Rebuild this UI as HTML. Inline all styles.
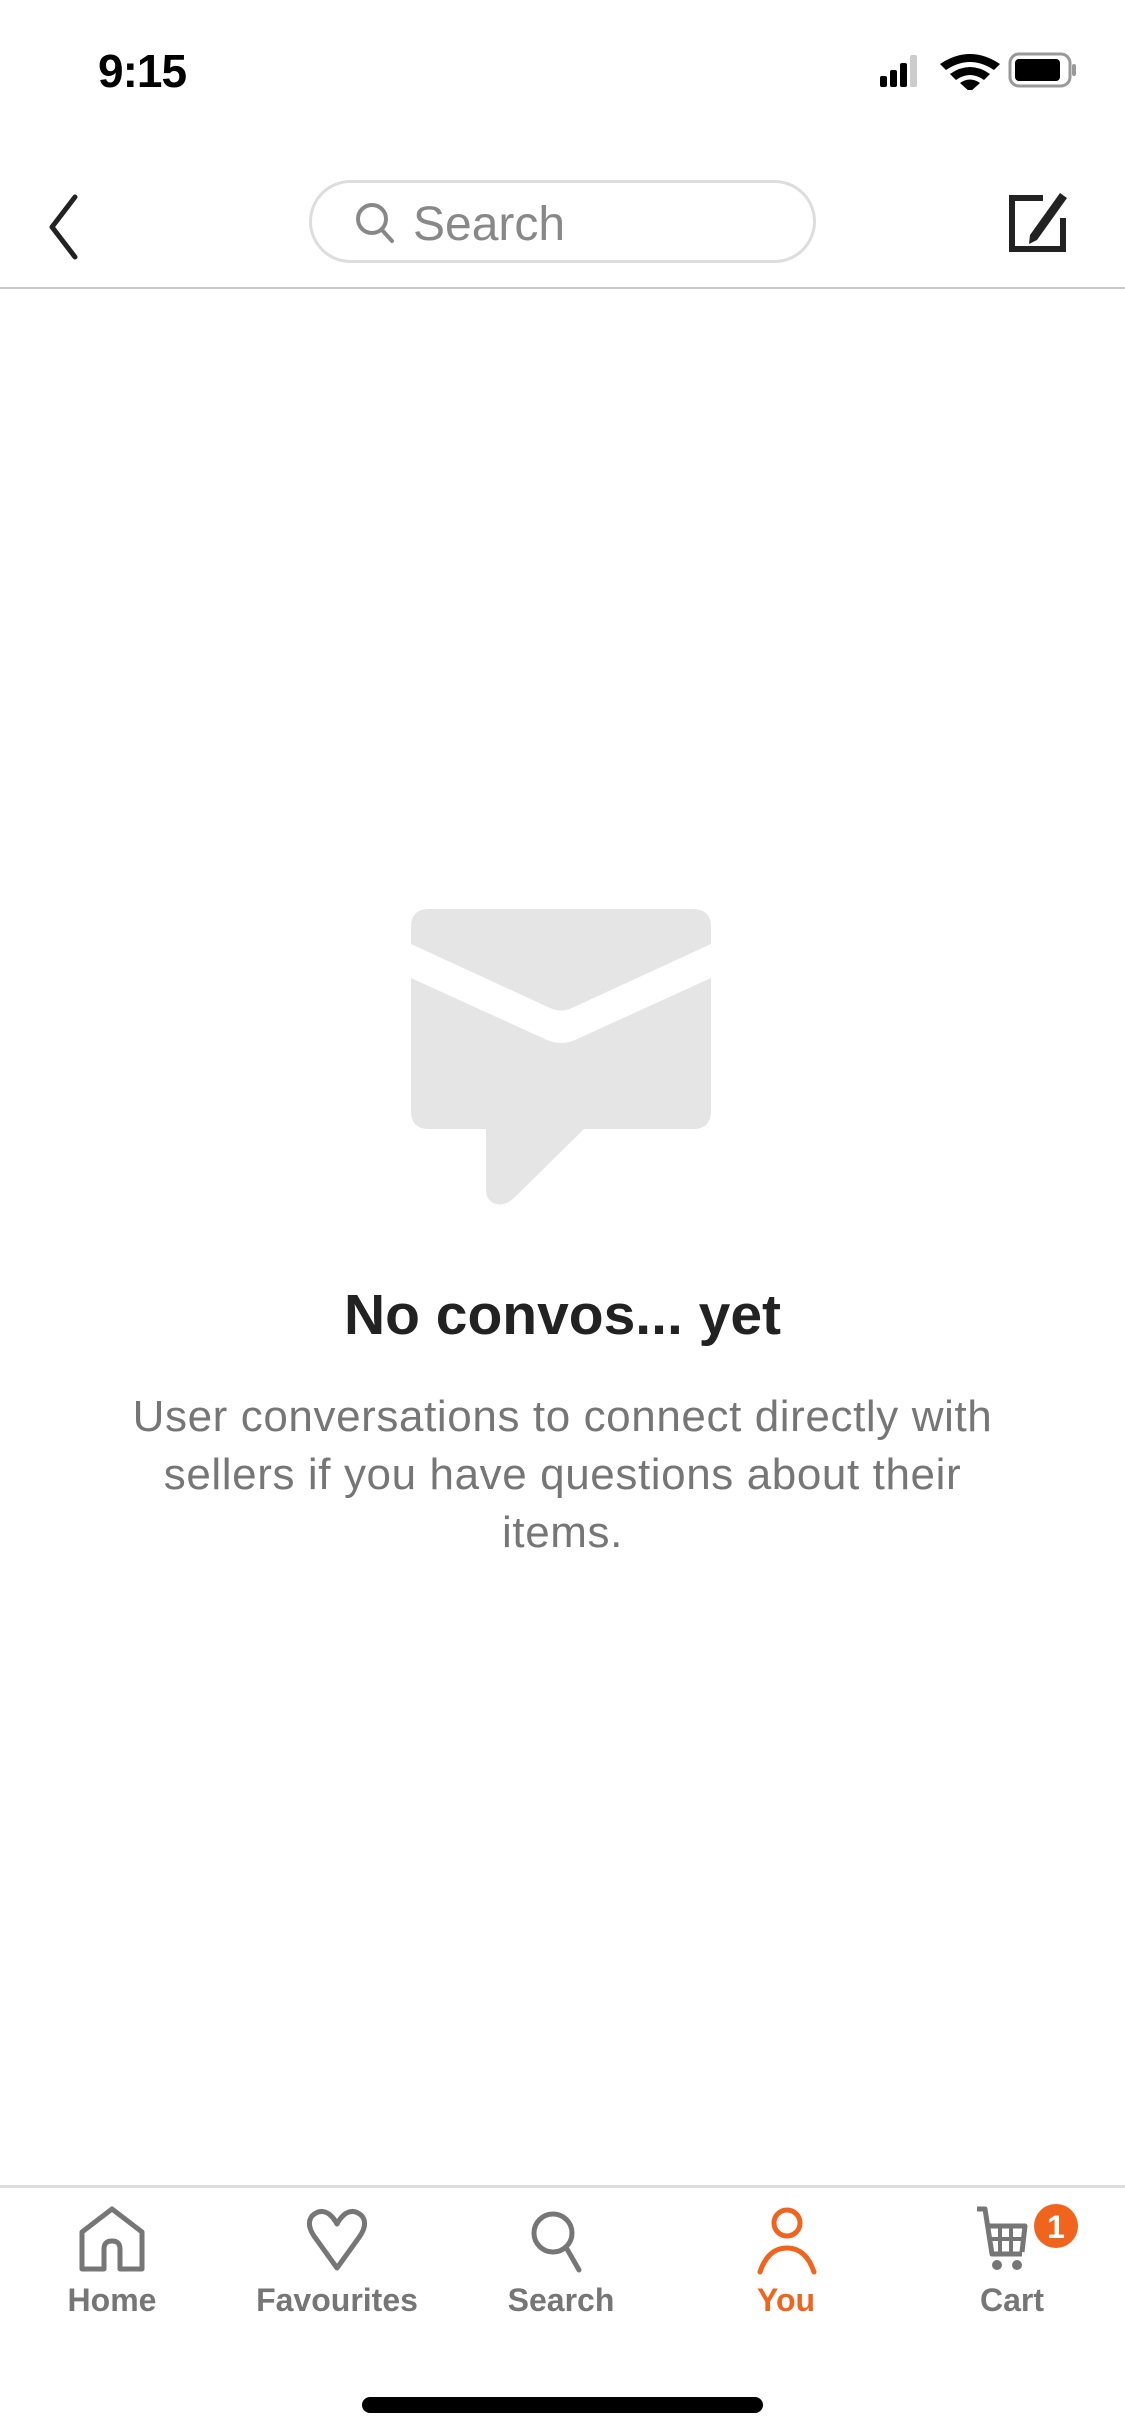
<!DOCTYPE html>
<html><head><meta charset="utf-8"><style>
*{margin:0;padding:0;box-sizing:border-box}
body{width:1125px;height:2436px;background:#fff;position:relative;overflow:hidden;font-family:"Liberation Sans",sans-serif}
.abs{position:absolute}
.time{left:98px;top:44px;font-size:46px;font-weight:bold;color:#000;letter-spacing:-1px}
.pill{left:309px;top:180px;width:507px;height:83px;border:3px solid #ddd;border-radius:42px}
.pill span{position:absolute;left:101px;top:14px;font-size:48px;color:#888}
.hr{left:0;width:1125px;height:2px;background:#c8c8c8}
.title{left:0;width:1125px;top:1282px;text-align:center;font-size:57px;font-weight:bold;color:#222;letter-spacing:0px}
.desc{left:112px;width:901px;top:1388px;text-align:center;font-size:44px;line-height:58px;color:#767676;letter-spacing:0.6px}
.tab{top:2282px;width:220px;text-align:center;font-size:32px;font-weight:bold;color:#767676}
</style></head><body>
<div class="abs time">9:15</div>
<svg class="abs" style="left:870px;top:50px" width="210" height="40" viewBox="0 0 210 40">
<rect x="10" y="26" width="7" height="11" rx="2" fill="#000"/>
<rect x="20" y="20" width="7" height="17" rx="2" fill="#000"/>
<rect x="30" y="13" width="7" height="24" rx="2" fill="#000"/>
<rect x="40" y="5" width="7" height="32" rx="2" fill="#ccc"/>
<path d="M70 14 Q100 -6 130 14 L124 20 Q100 4 76 20Z M80 24 Q100 10 120 24 L114 30 Q100 20 86 30Z M90 33 Q100 26 110 33 L100 42Z" fill="#000"/>
<rect x="140" y="4" width="60" height="32" rx="9" fill="none" stroke="#999" stroke-width="3"/>
<rect x="145" y="9" width="45" height="22" rx="4" fill="#000"/>
<rect x="202" y="14" width="4" height="12" rx="2" fill="#999"/>
</svg>
<svg class="abs" style="left:40px;top:190px" width="50" height="70"><path d="M35 7 L12 37 L35 67" fill="none" stroke="#222" stroke-width="5" stroke-linecap="round" stroke-linejoin="round"/></svg>
<div class="abs pill"><svg class="abs" style="left:42px;top:18px" width="50" height="50"><circle cx="18" cy="18" r="14" fill="none" stroke="#888" stroke-width="4"/><path d="M28 29 L38 40" stroke="#888" stroke-width="4" stroke-linecap="round"/></svg><span>Search</span></div>
<svg class="abs" style="left:1005px;top:188px" width="70" height="70"><path d="M38 10 H7 V61 H58 V30" fill="none" stroke="#222" stroke-width="6"/><path d="M55 5 L62 10 L32 52 L24 56 L25 47Z" fill="#222"/></svg>
<div class="abs hr" style="top:287px"></div>
<svg class="abs" style="left:400px;top:900px" width="330" height="320">
<path d="M29 9 H293 Q311 9 311 27 V211 Q311 229 293 229 H184 L115 297 Q104 308 93 303 Q86 299 86 290 V229 H29 Q11 229 11 211 V27 Q11 9 29 9Z" fill="#e5e5e5"/>
<path d="M11 44 L150 108 Q161 113 172 108 L311 44 L311 78 L175 140 Q161 146 147 140 L11 78Z" fill="#fff"/>
</svg>
<div class="abs title">No convos... yet</div>
<div class="abs desc">User conversations to connect directly with sellers if you have questions about their items.</div>
<div class="abs hr" style="top:2185px;background:#ddd;height:3px"></div>
<svg class="abs" style="left:76px;top:2205px" width="74" height="74"><path d="M6 64 V27 L36 4 L66 27 V64 H44 V44 Q44 36 36 36 Q28 36 28 44 V64Z" fill="none" stroke="#767676" stroke-width="5" stroke-linejoin="round"/></svg>
<svg class="abs" style="left:302px;top:2208px" width="72" height="72"><path d="M35 60 L12 28 Q4 16 10 8 Q18 0 27 6 Q32 10 35 16 Q38 10 43 6 Q52 0 60 8 Q66 16 58 28Z" fill="none" stroke="#767676" stroke-width="5" stroke-linejoin="round"/></svg>
<svg class="abs" style="left:525px;top:2204px" width="74" height="74"><circle cx="28" cy="29" r="19" fill="none" stroke="#767676" stroke-width="5"/><path d="M42 45 L54 66" stroke="#767676" stroke-width="5" stroke-linecap="round"/></svg>
<svg class="abs" style="left:750px;top:2204px" width="74" height="74"><circle cx="37" cy="19" r="13" fill="none" stroke="#f1641e" stroke-width="5"/><path d="M10 68 Q18 44 37 44 Q56 44 64 68" fill="none" stroke="#f1641e" stroke-width="5" stroke-linecap="round"/></svg>
<svg class="abs" style="left:970px;top:2200px" width="120" height="80">
<path d="M7 9 H15 L22 54 H52 M18 26 H55 L52 52" fill="none" stroke="#767676" stroke-width="5" stroke-linejoin="round"/>
<path d="M30 28 V52 M41 28 V52 M20 39 H53" stroke="#767676" stroke-width="4"/>
<circle cx="27" cy="65" r="5" fill="#767676"/><circle cx="47" cy="65" r="5" fill="#767676"/>
<circle cx="86" cy="26" r="22" fill="#f1641e"/>
<text x="86" y="38" text-anchor="middle" font-family="Liberation Sans" font-weight="bold" font-size="32" fill="#fff">1</text>
</svg>
<div class="abs tab" style="left:2px">Home</div>
<div class="abs tab" style="left:227px">Favourites</div>
<div class="abs tab" style="left:451px">Search</div>
<div class="abs tab" style="left:676px;color:#f1641e">You</div>
<div class="abs tab" style="left:902px">Cart</div>
<div class="abs" style="left:362px;top:2397px;width:401px;height:16px;border-radius:8px;background:#000"></div>
</body></html>
